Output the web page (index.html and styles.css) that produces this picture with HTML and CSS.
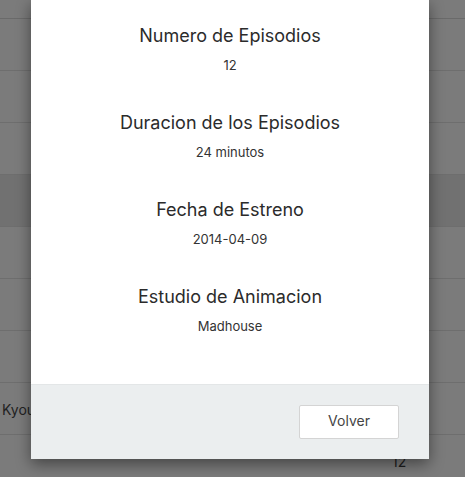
FILE: index.html
```html
<!DOCTYPE html>
<html lang="es">
<head>
<meta charset="utf-8">
<link rel="stylesheet" href="styles.css">
</head>
<body>
<div class="table">
  <div class="row head"></div>
  <div class="row"></div>
  <div class="row"></div>
  <div class="row"></div>
  <div class="row hover"></div>
  <div class="row"></div>
  <div class="row"></div>
  <div class="row"></div>
  <div class="row"><span class="cell-name">Kyoukai no Rinne</span></div>
  <div class="row"><span class="cell-num">12</span></div>
</div>
<div class="modal">
  <div class="modal-body">
    <div class="item">
      <h4>Numero de Episodios</h4>
      <p>12</p>
    </div>
    <div class="item">
      <h4>Duracion de los Episodios</h4>
      <p>24 minutos</p>
    </div>
    <div class="item">
      <h4>Fecha de Estreno</h4>
      <p>2014-04-09</p>
    </div>
    <div class="item">
      <h4>Estudio de Animacion</h4>
      <p>Madhouse</p>
    </div>
  </div>
  <div class="modal-footer">
    <button class="btn">Volver</button>
  </div>
</div>
</body>
</html>
```
FILE: styles.css
```css
html, body {
  margin: 0;
  padding: 0;
  height: 100%;
  overflow: hidden;
}
body {
  background: #7b7b7b;
  font-family: Inter, "Noto Sans", sans-serif;
  color: #333;
  position: relative;
}
.table {
  display: flex;
  flex-direction: column;
}
.row {
  height: 51px;
  border-bottom: 1px solid #6e6e6e;
  display: flex;
  align-items: center;
  position: relative;
  font-size: 14px;
  color: #222;
}
.row.head {
  height: 18px;
  border-bottom: 1px solid #6a6a6a;
}
.row.hover {
  background: #717171;
}
.cell-name {
  padding-left: 2px;
  padding-top: 2px;
  white-space: nowrap;
}
.cell-num {
  margin-left: 392px;
  margin-top: 2px;
  color: #1e1e1e;
}
.modal {
  position: absolute;
  left: 31px;
  top: 0;
  width: 398px;
  background: #fff;
  box-shadow: 0 5px 15px rgba(0, 0, 0, 0.45);
  border-radius: 0 0 2px 2px;
}
.modal-body {
  padding: 24px 0 48px;
  display: flex;
  flex-direction: column;
  gap: 36px;
  text-align: center;
}
.item {
  display: flex;
  flex-direction: column;
  gap: 7px;
}
.item h4 {
  margin: 0;
  font-size: 18px;
  font-weight: 400;
  line-height: 24px;
  color: #2b2b2b;
}
.item p {
  margin: 0;
  font-size: 13px;
  line-height: 20px;
  color: #333;
}
.modal-footer {
  border-top: 1px solid #e3e6e7;
  background: #ebeeef;
  padding: 20px 30px 20px;
  display: flex;
  justify-content: flex-end;
}
.btn {
  width: 100px;
  height: 34px;
  background: #fff;
  border: 1px solid #d4d4d4;
  border-radius: 2px;
  font-family: inherit;
  font-size: 14px;
  line-height: 1;
  padding: 0 0 2px;
  color: #444;
}
```
